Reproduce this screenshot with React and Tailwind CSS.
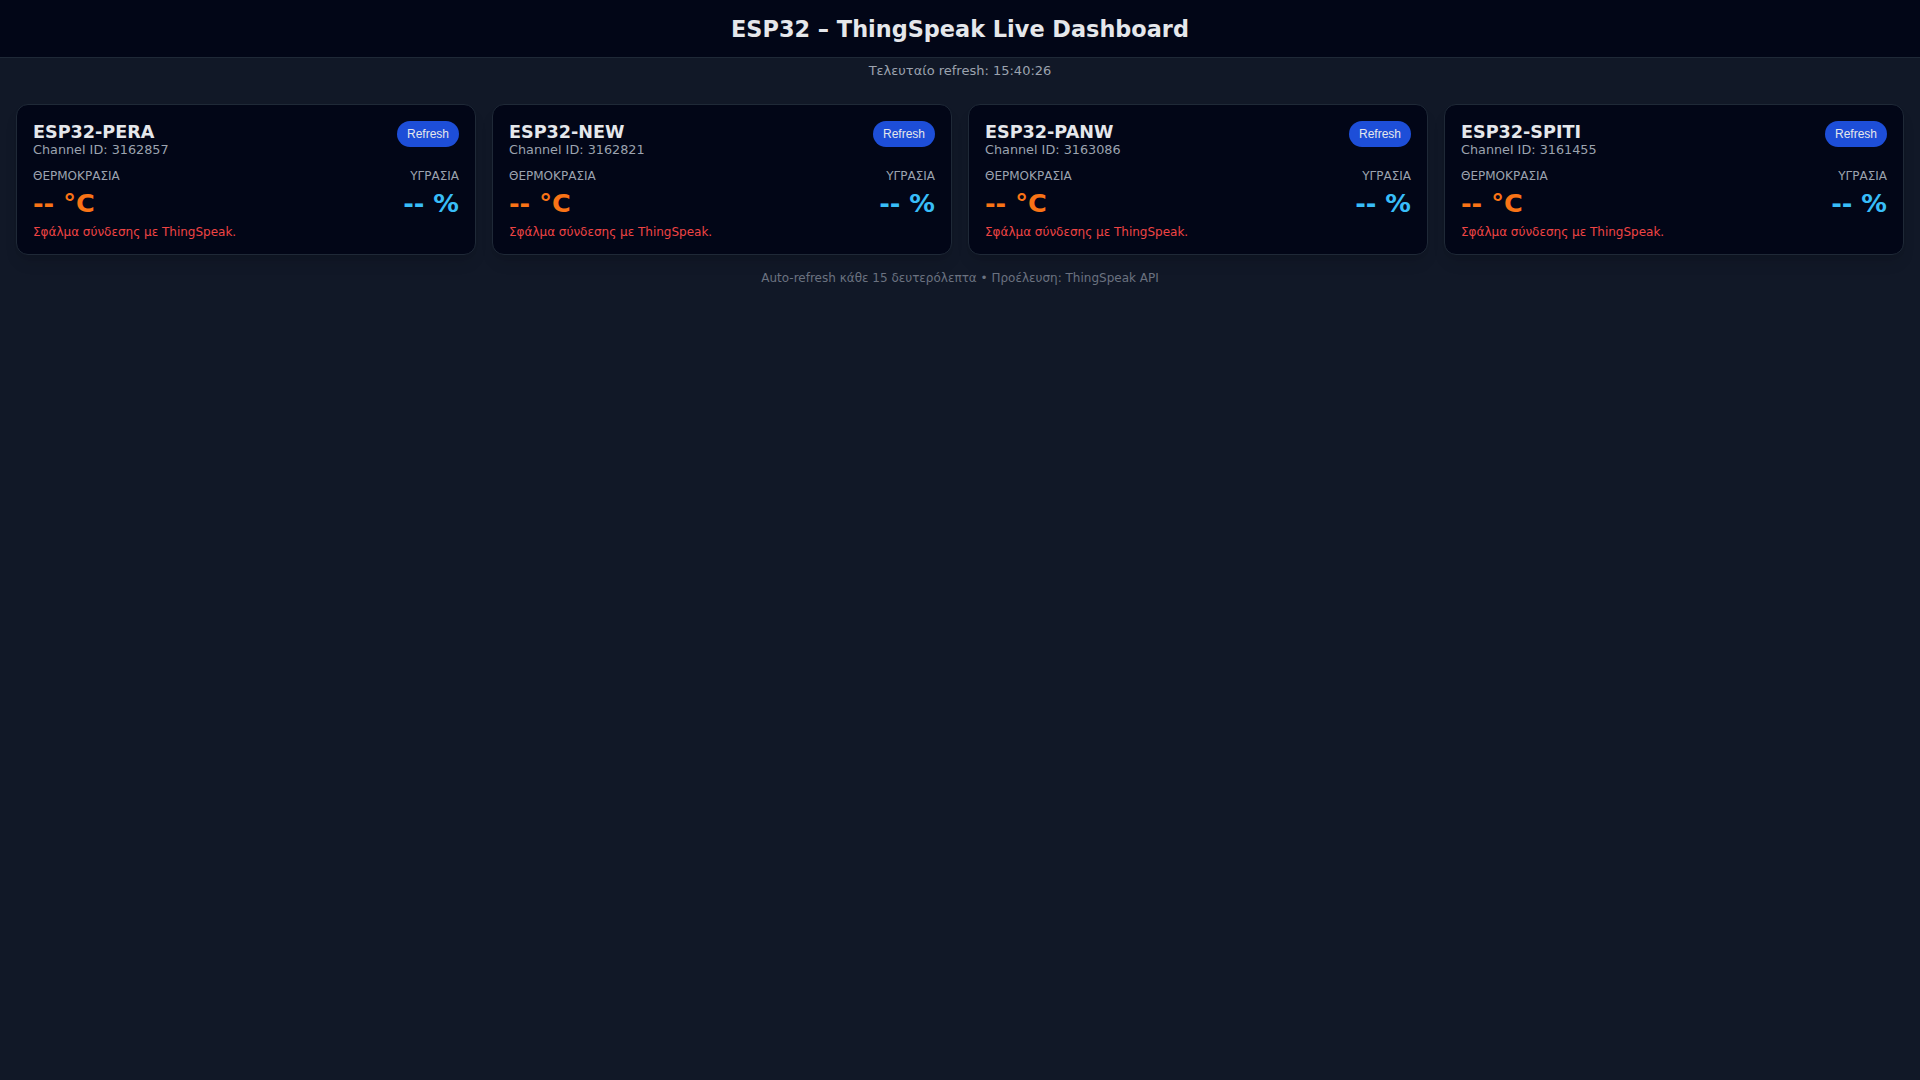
import React from "react";

const channels = [
  { name: "ESP32-PERA", id: "3162857" },
  { name: "ESP32-NEW", id: "3162821" },
  { name: "ESP32-PANW", id: "3163086" },
  { name: "ESP32-SPITI", id: "3161455" },
];

const Card = ({ name, id }) => {
  return (
    <div className="bg-[#020617] border border-[#1f2937] rounded-xl px-4 pt-4 pb-[15px] shadow-lg">
      {/* Card header */}
      <div className="flex justify-between items-start">
        <div>
          <h2 className="text-[17.6px] leading-[22px] font-bold text-[#e5e7eb]">
            {name}
          </h2>
          <p className="text-[12.8px] leading-[14px] text-[#9ca3af]">
            Channel ID: {id}
          </p>
        </div>
        <button
          className="bg-[#1d4ed8] text-[#e5e7eb] text-[12px] leading-[26px] h-[26px] px-[10px] rounded-full"
          style={{ fontFamily: '"Liberation Sans", Arial, sans-serif' }}
        >
          Refresh
        </button>
      </div>

      {/* Values */}
      <div className="flex justify-between mt-3">
        <div>
          <p className="text-[12px] leading-[14px] text-[#9ca3af]">ΘΕΡΜΟΚΡΑΣΙΑ</p>
          <p className="mt-[6px] text-[25.6px] leading-[28px] font-bold text-[#f97316]">
            -- °C
          </p>
        </div>
        <div className="text-right">
          <p className="text-[12px] leading-[14px] text-[#9ca3af]">ΥΓΡΑΣΙΑ</p>
          <p className="mt-[6px] text-[25.6px] leading-[28px] font-bold text-[#38bdf8]">
            -- %
          </p>
        </div>
      </div>

      <p className="mt-[8px] text-[12px] leading-[14px] text-[#ef4444]">
        Σφάλμα σύνδεσης με ThingSpeak.
      </p>
    </div>
  );
};

const App = () => {
  return (
    <div
      className="min-h-screen w-full bg-[#111827]"
      style={{ fontFamily: '"DejaVu Sans", Verdana, sans-serif' }}
    >
      <header className="h-[58px] pt-[2px] flex items-center justify-center bg-[#020617] border-b border-[#1f2937]">
        <h1 className="text-[22.4px] font-bold text-[#e5e7eb]">
          ESP32 – ThingSpeak Live Dashboard
        </h1>
      </header>

      <p className="mt-[5px] text-center text-[13px] leading-[16px] text-[#9ca3af]">
        Τελευταίο refresh: 15:40:26
      </p>

      <div className="grid grid-cols-4 gap-4 px-4 mt-[25px]">
        {channels.map((c) => (
          <Card key={c.id} name={c.name} id={c.id} />
        ))}
      </div>

      <p className="mt-[15px] text-center text-[12px] leading-[16px] text-[#6b7280]">
        Auto-refresh κάθε 15 δευτερόλεπτα • Προέλευση: ThingSpeak API
      </p>
    </div>
  );
};

export default App;
